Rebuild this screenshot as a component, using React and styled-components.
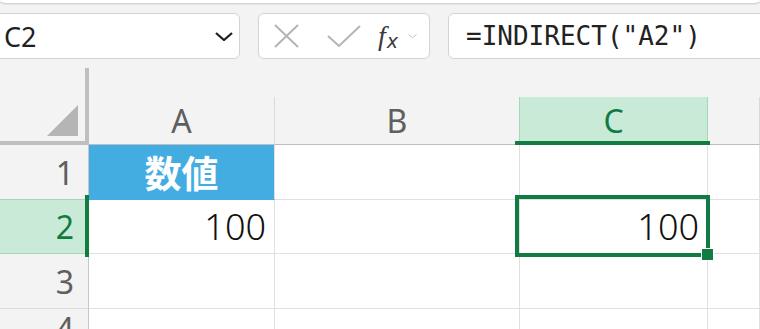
import React from 'react';
import styled, { createGlobalStyle, css } from 'styled-components';

const GlobalStyle = createGlobalStyle`
  body {
    margin: 0;
    background: #f3f3f3;
    overflow: hidden;
    font-family: "Noto Sans", "Noto Sans CJK JP", sans-serif;
  }
`;

const green = '#107c41';
const greenFill = '#caead8';
const greenEdge = '#a3d8ba';

const Page = styled.div`
  width: 760px;
  height: 329px;
  overflow: hidden;
  background: #f3f3f3;
`;

const RibbonEdge = styled.div`
  height: 3px;
  background: #fff;
  border-radius: 0 0 6px 6px / 0 0 3px 3px;
  box-shadow: 0 1px 2px rgba(0, 0, 0, 0.18);
`;

const FormulaRow = styled.div`
  display: flex;
  gap: 18px;
  height: 46px;
  margin-top: 10px;
`;

const Box = styled.div`
  display: flex;
  align-items: center;
  box-sizing: border-box;
  height: 46px;
  background: #fff;
  border: 1.5px solid #d3d3d3;
  border-radius: 6px;
`;

const NameBox = styled(Box)`
  width: 252px;
  margin-left: -12px;
  padding: 0 6px 0 15px;
  justify-content: space-between;
  font-size: 27px;
  color: #1f1f1f;
`;

const FxButtons = styled(Box)`
  width: 172px;
  padding-left: 14px;
`;

const IconSlot = styled.span`
  display: flex;
  align-items: center;
  margin-left: ${p => p.$ml || 0}px;
`;

const FxText = styled.span`
  display: flex;
  align-items: baseline;
  color: #3a3a3a;
  font-family: "Liberation Serif", serif;
  font-style: italic;
  line-height: 1;

  i {
    font-size: 28px;
  }

  span {
    font-family: "DejaVu Sans", sans-serif;
    font-style: italic;
    font-size: 19px;
    margin-left: 1px;
    position: relative;
    top: 3px;
  }
`;

const FormulaInput = styled(Box)`
  flex: 1;
  margin-right: -20px;
  padding-left: 17px;
  font-family: "DejaVu Sans Mono", "Liberation Mono", monospace;
  font-size: 26px;
  color: #222;
`;

const Sheet = styled.div`
  display: grid;
  grid-template-columns: 89px 186px 245px 188px 1fr;
  grid-template-rows: 77px 55px 54px 55px 40px;
  margin-top: 9px;
`;

const Corner = styled.div`
  box-sizing: border-box;
  display: flex;
  align-items: flex-end;
  justify-content: flex-end;
  padding: 0 7px 5px 0;
  border-right: 4px solid #bfbfbf;
  border-bottom: 4px solid #bfbfbf;
`;

const ColHeader = styled.div`
  position: relative;
  align-self: end;
  box-sizing: border-box;
  height: 48px;
  display: flex;
  align-items: center;
  justify-content: center;
  font-size: 32px;
  color: #5f5f5f;
  border-right: 1px solid #dadada;
  border-bottom: 1px solid #bdbdbd;

  ${p => p.$selected && css`
    z-index: 2;
    background: ${greenFill};
    color: ${green};
    border-left: 1px solid ${greenEdge};
    border-right: 1px solid ${greenEdge};
    margin-left: -1px;

    &::after {
      content: '';
      position: absolute;
      left: -5px;
      right: -3px;
      bottom: -1px;
      height: 4px;
      background: ${green};
    }
  `}
`;

const RowHeader = styled.div`
  position: relative;
  box-sizing: border-box;
  display: flex;
  align-items: center;
  justify-content: flex-end;
  padding-right: 14px;
  font-size: 32px;
  color: #5f5f5f;
  border-right: 1px solid #c6c6c6;
  border-bottom: 1px solid #dcdcdc;

  ${p => p.$selected && css`
    z-index: 2;
    background: ${greenFill};
    color: ${green};
    border-bottom-color: ${greenEdge};
    box-shadow: 0 -1px 0 ${greenEdge};

    &::after {
      content: '';
      position: absolute;
      right: -1px;
      top: -5px;
      bottom: -4px;
      width: 4px;
      background: ${green};
    }
  `}
`;

const Cell = styled.div`
  position: relative;
  z-index: ${p => (p.$active ? 3 : 'auto')};
  box-sizing: border-box;
  display: flex;
  align-items: center;
  justify-content: ${p => (p.$align === 'center' ? 'center' : 'flex-end')};
  padding-right: 8px;
  background: ${p => (p.$fill ? p.$fill : '#fff')};
  color: #111;
  font-size: 36px;
  font-weight: 300;
  border-right: 1px solid #e0e0e0;
  border-bottom: 1px solid ${p => (p.$fill ? p.$fill : '#e0e0e0')};
`;

const Heading = styled.span`
  color: #fff;
  font-family: "Noto Sans CJK JP", sans-serif;
  font-weight: 700;
  font-size: 37px;
  padding-left: 8px;
`;

const Selection = styled.div`
  position: absolute;
  left: -5px;
  top: -5px;
  right: -3px;
  bottom: -4px;
  border: 4px solid ${green};
  pointer-events: none;
`;

const FillHandle = styled.div`
  position: absolute;
  right: -8px;
  bottom: -8px;
  width: 11px;
  height: 11px;
  background: ${green};
  border: 1px solid #fff;
`;

const columns = ['A', 'B', 'C'];
const rows = [
  { n: 1, cells: [{ heading: '数値' }, {}, {}] },
  { n: 2, cells: [{ value: '100' }, {}, { value: '100', active: true }] },
  { n: 3, cells: [{}, {}, {}] },
  { n: 4, cells: [{}, {}, {}] },
];

function Chevron({ size = 18, color = '#1f1f1f', w = 2.2 }) {
  return (
    <svg width={size} height={size / 2} viewBox="0 0 18 9">
      <polyline points="1,1 9,8 17,1" fill="none" stroke={color} strokeWidth={w} />
    </svg>
  );
}

export default function App() {
  return (
    <Page>
      <GlobalStyle />
      <RibbonEdge />
      <FormulaRow>
        <NameBox>
          C2
          <Chevron />
        </NameBox>
        <FxButtons>
          <IconSlot>
            <svg width="27" height="26" viewBox="0 0 27 26">
              <path d="M2 2 L25 24 M25 2 L2 24" stroke="#b4b4b4" strokeWidth="2" />
            </svg>
          </IconSlot>
          <IconSlot $ml={27}>
            <svg width="35" height="23" viewBox="0 0 35 23">
              <polyline points="1,11 12,21 33,1" fill="none" stroke="#b4b4b4" strokeWidth="2" />
            </svg>
          </IconSlot>
          <IconSlot $ml={16}>
            <FxText>
              <i>f</i>
              <span>x</span>
            </FxText>
          </IconSlot>
          <IconSlot $ml={10}>
            <Chevron size={9} color="#b4b4b4" w={1.6} />
          </IconSlot>
        </FxButtons>
        <FormulaInput>=INDIRECT("A2")</FormulaInput>
      </FormulaRow>

      <Sheet>
        <Corner>
          <svg width="31" height="31" viewBox="0 0 31 31">
            <polygon points="31,0 31,31 0,31" fill="#b5b5b5" />
          </svg>
        </Corner>
        {columns.map(c => (
          <ColHeader key={c} $selected={c === 'C'}>
            {c}
          </ColHeader>
        ))}
        <ColHeader />

        {rows.map(row => (
          <React.Fragment key={row.n}>
            <RowHeader $selected={row.n === 2}>{row.n}</RowHeader>
            {row.cells.map((cell, i) => (
              <Cell
                key={i}
                $active={cell.active}
                $fill={cell.heading ? '#43ade2' : undefined}
                $align={cell.heading ? 'center' : 'right'}
              >
                {cell.heading && <Heading>{cell.heading}</Heading>}
                {cell.value}
                {cell.active && (
                  <Selection>
                    <FillHandle />
                  </Selection>
                )}
              </Cell>
            ))}
            <Cell />
          </React.Fragment>
        ))}
      </Sheet>
    </Page>
  );
}
